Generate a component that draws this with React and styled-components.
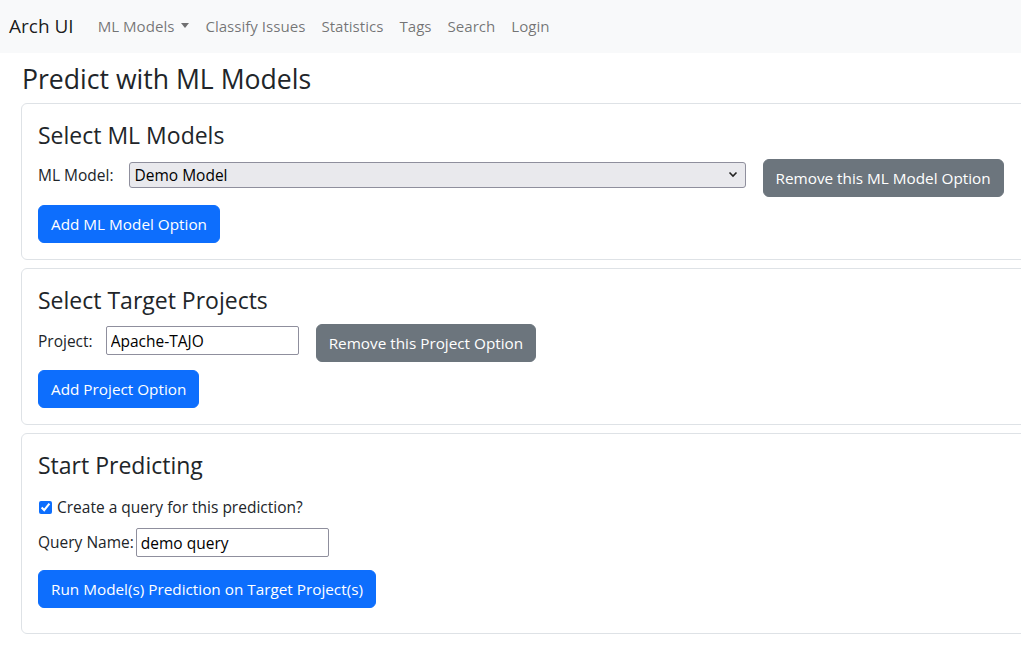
import React from "react";
import styled, { createGlobalStyle } from "styled-components";

const Global = createGlobalStyle`
  html, body { margin: 0; padding: 0; }
  body {
    font-family: "Open Sans", "Noto Sans", "Liberation Sans", sans-serif;
    font-size: 15.5px;
    line-height: 24px;
    color: #212529;
    background: #fff;
    overflow-x: hidden;
  }
  * { box-sizing: border-box; }
`;

const Page = styled.div`
  width: 100%;
  overflow: hidden;
`;

const NavBar = styled.nav`
  height: 53px;
  background: #f8f9fa;
  display: flex;
  align-items: center;
  padding: 0 9px 1px;
`;

const Brand = styled.a`
  font-size: 19px;
  line-height: 30px;
  color: rgba(0, 0, 0, 0.9);
  margin-right: 16px;
  text-decoration: none;
`;

const NavLinks = styled.ul`
  display: flex;
  list-style: none;
  margin: 0;
  padding: 0;
`;

const NavLink = styled.li`
  padding: 8px 8px;
  color: rgba(0, 0, 0, 0.55);
  display: flex;
  align-items: center;
  font-size: 15.1px;
  cursor: pointer;
`;

const Caret = styled.span`
  display: inline-block;
  margin-left: 7px;
  width: 0;
  height: 0;
  border-top: 5px solid rgba(0, 0, 0, 0.55);
  border-left: 4.5px solid transparent;
  border-right: 4.5px solid transparent;
  transform: translateY(-1px);
`;

const Main = styled.main`
  padding: 10px 0 20px 21px;
`;

const PageTitle = styled.h2`
  font-size: 26.6px;
  line-height: 32px;
  font-weight: 400;
  margin: 0 0 8px 1px;
`;

const Card = styled.section`
  border: 1px solid #dee2e6;
  border-radius: 6px;
  margin-right: -40px;
  margin-bottom: 8px;
  padding: 16px;
`;

const CardTitle = styled.h4`
  font-size: 23px;
  line-height: 29px;
  font-weight: 400;
  margin: 0 0 ${(p) => p.$mb || 10}px;
  padding-top: 1px;
`;

const Row = styled.div`
  display: flex;
  align-items: flex-start;
  margin-top: ${(p) => p.$mt || 0}px;
`;

const Label = styled.label`
  margin-top: ${(p) => p.$mt || 0}px;
  margin-right: ${(p) => p.$mr || 0}px;
  line-height: 24px;
  white-space: nowrap;
`;

const SelectWrap = styled.div`
  position: relative;
  width: 617px;
  margin-top: 3px;
  margin-right: 17px;
`;

const Select = styled.select`
  appearance: none;
  width: 100%;
  height: 26px;
  font: inherit;
  font-size: 15.5px;
  line-height: 22px;
  color: #000;
  background: #e9e9ed;
  border: 1px solid #8f8f9d;
  border-radius: 3px;
  padding: 0 24px 0 5px;
`;

const Chevron = styled.svg`
  position: absolute;
  right: 8px;
  top: 9px;
  pointer-events: none;
`;

const TextInput = styled.input`
  width: 193px;
  height: 29px;
  font: inherit;
  font-size: 15.5px;
  color: #000;
  background: #fff;
  border: 1px solid #8f8f9d;
  border-radius: 2px;
  padding: 1px 4px;
  margin-top: ${(p) => p.$mt || 0}px;
  margin-right: ${(p) => p.$mr || 0}px;
`;

const Button = styled.button`
  font: inherit;
  font-size: 15.3px;
  line-height: 24px;
  padding: 6px 12px;
  border-radius: 6px;
  border: 1px solid ${(p) => (p.$variant === "secondary" ? "#6c757d" : "#0d6efd")};
  background: ${(p) => (p.$variant === "secondary" ? "#6c757d" : "#0d6efd")};
  color: #fff;
  cursor: pointer;
  white-space: nowrap;
  margin-top: ${(p) => p.$mt || 0}px;
  margin-bottom: ${(p) => p.$mb || 0}px;
`;

const CheckRow = styled.div`
  display: flex;
  align-items: center;
  height: 24px;
`;

const Check = styled.input`
  width: 13px;
  height: 13px;
  margin: 0 5px 0 1px;
  accent-color: #0d6efd;
`;

export default function App() {
  return (
    <Page>
      <Global />
      <NavBar>
        <Brand>Arch UI</Brand>
        <NavLinks>
          <NavLink>
            ML Models<Caret />
          </NavLink>
          <NavLink>Classify Issues</NavLink>
          <NavLink>Statistics</NavLink>
          <NavLink>Tags</NavLink>
          <NavLink>Search</NavLink>
          <NavLink>Login</NavLink>
        </NavLinks>
      </NavBar>
      <Main>
        <PageTitle>Predict with ML Models</PageTitle>

        <Card>
          <CardTitle $mb={9}>Select ML Models</CardTitle>
          <Row>
            <Label $mt={4} $mr={15}>ML Model:</Label>
            <SelectWrap>
              <Select defaultValue="demo">
                <option value="demo">Demo Model</option>
              </Select>
              <Chevron width="10" height="7" viewBox="0 0 10 7">
                <path d="M1.5 1.5 L5 5 L8.5 1.5" fill="none" stroke="#222" strokeWidth="1.6" />
              </Chevron>
            </SelectWrap>
            <Button $variant="secondary">Remove this ML Model Option</Button>
          </Row>
          <Button $mt={8}>Add ML Model Option</Button>
        </Card>

        <Card>
          <CardTitle $mb={9}>Select Target Projects</CardTitle>
          <Row>
            <Label $mt={5} $mr={13}>Project:</Label>
            <TextInput defaultValue="Apache-TAJO" $mt={2} $mr={17} />
            <Button $variant="secondary">Remove this Project Option</Button>
          </Row>
          <Button $mt={8}>Add Project Option</Button>
        </Card>

        <Card>
          <CardTitle $mb={15}>Start Predicting</CardTitle>
          <CheckRow>
            <Check type="checkbox" defaultChecked />
            <span>Create a query for this prediction?</span>
          </CheckRow>
          <Row $mt={9}>
            <Label $mt={2} $mr={2}>Query Name:</Label>
            <TextInput defaultValue="demo query" />
          </Row>
          <Button $mt={13} $mb={9}>Run Model(s) Prediction on Target Project(s)</Button>
        </Card>
      </Main>
    </Page>
  );
}
